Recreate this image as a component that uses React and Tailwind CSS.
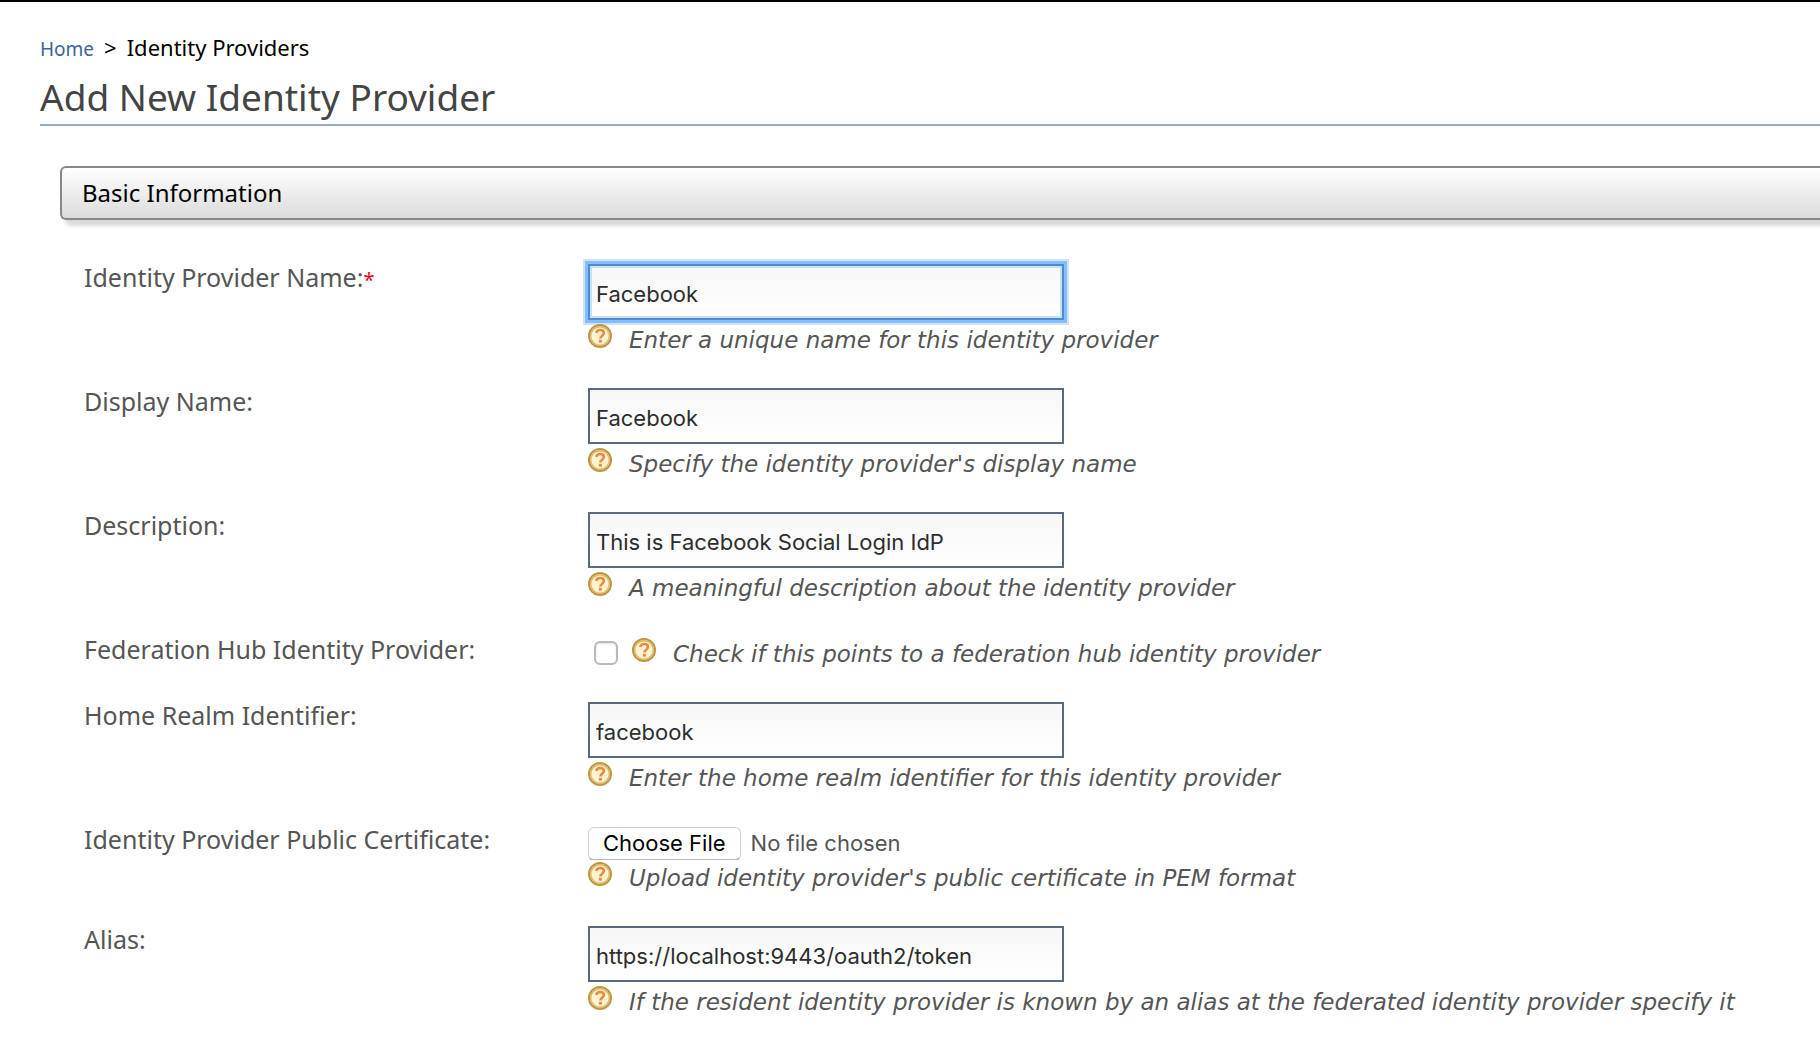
const FIELD_CLASS =
  "block h-14 w-[476px] max-w-full rounded-none border-2 bg-linear-to-b from-[#f7f7f7] to-white px-1.5 pt-1 font-['Inter',sans-serif] text-[22px] text-[#2d2d2d] outline-none";
const IDLE_CLASS = "border-[#596a7f]";
const ACTIVE_CLASS =
  "border-[#4a8cd4] shadow-[0_0_0_3px_#85bdfc,0_0_0_5px_#cde4fc,inset_0_0_0_2px_#c9e0f7]";

function HelpIcon() {
  return (
    <svg viewBox="0 0 24 24" className="size-6 shrink-0" aria-hidden="true">
      <circle cx="12" cy="12" r="11" fill="#fdf3cf" stroke="#bd9440" strokeWidth="2" />
      <circle cx="12" cy="12" r="9.4" fill="none" stroke="#dcbc6c" strokeWidth="1.6" />
      <path
        d="M8.2 8.8C8.8 6.9 10.3 6 12.1 6c2.2 0 3.8 1.2 3.8 3.1 0 2.6-3.5 2.6-3.5 5.3"
        fill="none"
        stroke="#e88a45"
        strokeWidth="2.6"
      />
      <rect x="10.9" y="15.8" width="3" height="2.8" fill="#e88a45" />
    </svg>
  );
}

function Help({ id, children }) {
  return (
    <div className="flex items-start gap-[17px]">
      <HelpIcon />
      <p
        id={id}
        className="whitespace-nowrap font-['DejaVu_Sans',sans-serif] text-[23px] leading-8 text-[#555] italic"
      >
        {children}
      </p>
    </div>
  );
}

function Row({ id, label, required, children }) {
  return (
    <div className="flex pb-5">
      <label htmlFor={id} className="w-[504px] shrink-0 pt-2 text-[25px] leading-[34px] text-[#555]">
        {label}
        {required && <span className="text-[20px] leading-none text-[#f00020]">*</span>}
      </label>
      <div className="min-w-0 grow pt-3">{children}</div>
    </div>
  );
}

function TextRow({ id, label, value, help, required, active }) {
  return (
    <Row id={id} label={label} required={required}>
      <input
        id={id}
        type="text"
        defaultValue={value}
        aria-describedby={`${id}-help`}
        className={`${FIELD_CLASS} ${active ? ACTIVE_CLASS : IDLE_CLASS}`}
      />
      <div className="mt-1">
        <Help id={`${id}-help`}>{help}</Help>
      </div>
    </Row>
  );
}

export default function App() {
  return (
    <main className="overflow-hidden border-t-2 border-black bg-white font-['Noto_Sans',sans-serif]">
      <div className="pl-10">
        <nav aria-label="Breadcrumb" className="flex items-baseline gap-2.5 pt-7 text-[22px] leading-[34px] text-black">
          <a href="#home" className="text-[19px] leading-none text-[#386698]">Home</a>
          <span>&gt;</span>
          <span>Identity Providers</span>
        </nav>
        <h1 className="border-b-2 border-[#95a9c9] pt-1.5 text-[37px] leading-[54px] text-[#444]">
          Add New Identity Provider
        </h1>

        <form className="mt-10 pl-5">
          <h2 className="rounded-l-md border-2 border-r-0 border-[#888] bg-linear-to-b from-white to-[#dcdcdc] pl-5 text-[24px] leading-[50px] text-black shadow-[5px_6px_4px_#d9d9d9]">
            Basic Information
          </h2>

          <div className="mt-8 pl-6">
            <TextRow id="idp-name" label="Identity Provider Name:" required active value="Facebook" help="Enter a unique name for this identity provider" />
            <TextRow id="display-name" label="Display Name:" value="Facebook" help="Specify the identity provider's display name" />
            <TextRow id="description" label="Description:" value="This is Facebook Social Login IdP" help="A meaningful description about the identity provider" />
            <Row id="federation-hub" label="Federation Hub Identity Provider:">
              <div className="flex items-start gap-3.5 pt-0.5 pl-1.5">
                <input
                  id="federation-hub"
                  type="checkbox"
                  aria-describedby="federation-hub-help"
                  className="mt-[3px] size-6 shrink-0 appearance-none rounded-[6px] border-2 border-[#b9b9b9] bg-white shadow-[inset_0_1px_2px_#e4e4e4]"
                />
                <Help id="federation-hub-help">Check if this points to a federation hub identity provider</Help>
              </div>
            </Row>
            <TextRow id="home-realm" label="Home Realm Identifier:" value="facebook" help="Enter the home realm identifier for this identity provider" />
            <Row id="certificate" label="Identity Provider Public Certificate:">
              <input
                id="certificate"
                type="file"
                aria-describedby="certificate-help"
                className="block h-[34px] w-[476px] font-['Inter',sans-serif] text-[22px] leading-[34px] text-[#555] file:mr-2.5 file:h-[34px] file:rounded-md file:border file:border-b-2 file:border-[#cfcfcf] file:border-b-[#b4b4b4] file:bg-white file:px-3.5 file:text-[22px] file:leading-[30px] file:text-black"
              />
              <div className="mt-0.5">
                <Help id="certificate-help">Upload identity provider's public certificate in PEM format</Help>
              </div>
            </Row>
            <TextRow id="alias" label="Alias:" value="https://localhost:9443/oauth2/token" help="If the resident identity provider is known by an alias at the federated identity provider specify it" />
          </div>
        </form>
      </div>
    </main>
  );
}
